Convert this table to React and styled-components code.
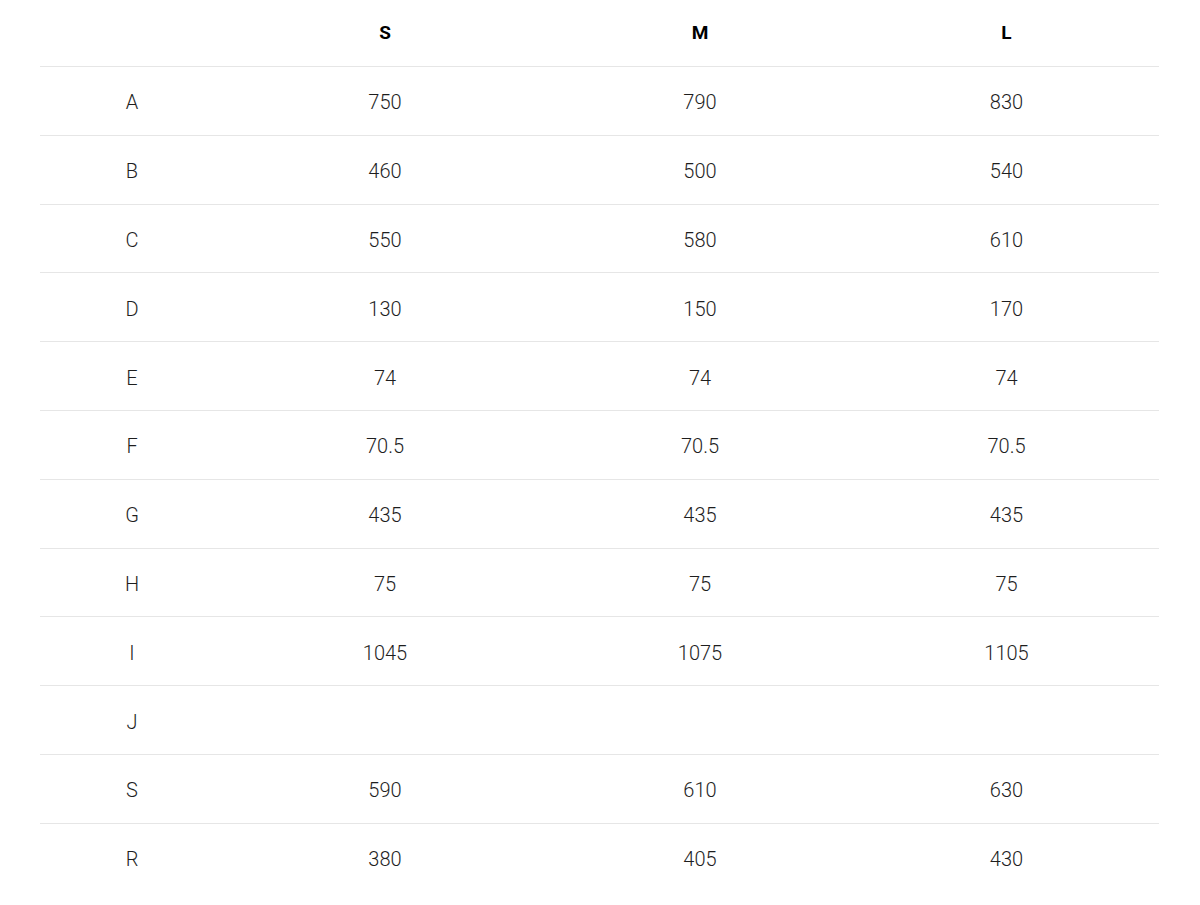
import React from 'react';
import styled, { createGlobalStyle } from 'styled-components';

const sizes = ['S', 'M', 'L'];

const rows = [
  ['A', '750', '790', '830'],
  ['B', '460', '500', '540'],
  ['C', '550', '580', '610'],
  ['D', '130', '150', '170'],
  ['E', '74', '74', '74'],
  ['F', '70.5', '70.5', '70.5'],
  ['G', '435', '435', '435'],
  ['H', '75', '75', '75'],
  ['I', '1045', '1075', '1105'],
  ['J', '', '', ''],
  ['S', '590', '610', '630'],
  ['R', '380', '405', '430'],
];

const GlobalStyle = createGlobalStyle`
  body {
    margin: 0;
    background: #fff;
    font-family: Roboto, "Liberation Sans", sans-serif;
  }
`;

const Page = styled.div`
  padding: 0 41px 0 40px;
`;

const Table = styled.div`
  display: grid;
  grid-template-columns: 184px 322px 308px 1fr;
`;

const Row = styled.div`
  display: contents;
`;

const Cell = styled.div`
  box-sizing: border-box;
  height: ${(p) => (p.$head ? '66px' : '68.8px')};
  display: flex;
  align-items: center;
  justify-content: center;
  border-top: ${(p) => (p.$head ? 'none' : '1px solid #e6e6e6')};
  font-size: ${(p) => (p.$head ? '19px' : '20px')};
  font-weight: ${(p) => (p.$head ? 700 : 300)};
  color: ${(p) => (p.$head ? '#000' : '#1e1e1e')};
  padding-top: ${(p) => (p.$head ? '0' : '3px')};
  padding-bottom: ${(p) => (p.$head ? '2px' : '0')};
`;

export default function App() {
  return (
    <Page>
      <GlobalStyle />
      <Table>
        <Row>
          <Cell $head />
          {sizes.map((s) => (
            <Cell $head key={s}>
              {s}
            </Cell>
          ))}
        </Row>
        {rows.map((r, i) => (
          <Row key={i}>
            {r.map((v, j) => (
              <Cell key={j}>{v}</Cell>
            ))}
          </Row>
        ))}
      </Table>
    </Page>
  );
}
